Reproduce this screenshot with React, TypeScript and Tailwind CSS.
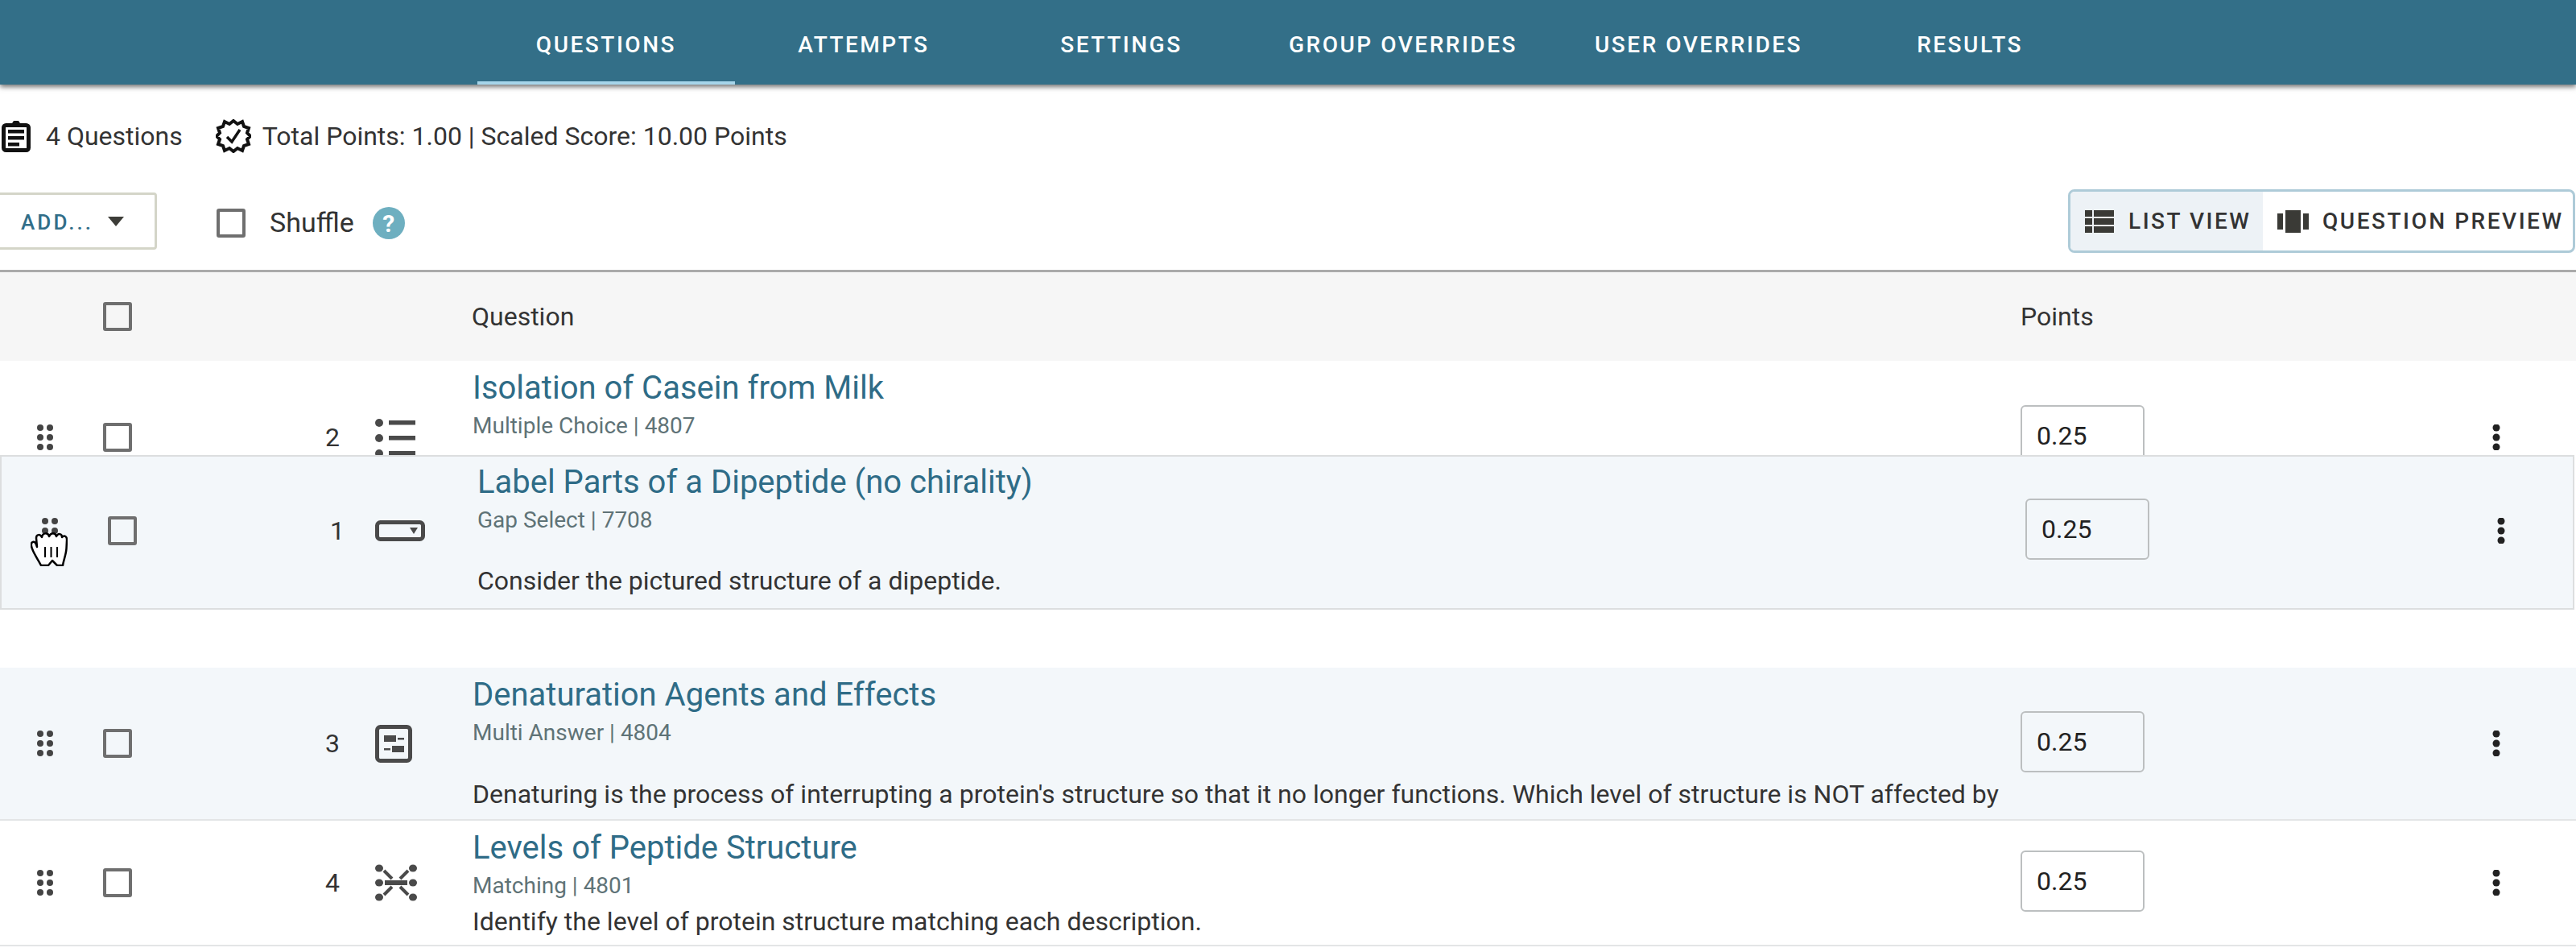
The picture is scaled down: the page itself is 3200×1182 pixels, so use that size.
import React from 'react';

const tabs = [
  { label: 'QUESTIONS', active: true },
  { label: 'ATTEMPTS' },
  { label: 'SETTINGS' },
  { label: 'GROUP OVERRIDES' },
  { label: 'USER OVERRIDES' },
  { label: 'RESULTS' },
];

const ClipboardIcon = () => (
  <svg width="36" height="40" viewBox="0 0 36 40" className="shrink-0">
    <rect x="2.500" y="6.500" width="31" height="31" rx="3" fill="none" stroke="#111" strokeWidth="5" />
    <path d="M11 7 L15 1 H21 L25 7 Z" fill="#111" />
    <rect x="8" y="12" width="20" height="4.500" fill="#111" />
    <rect x="8" y="20" width="20" height="4.500" fill="#111" />
    <rect x="8" y="28" width="14" height="4.500" fill="#111" />
  </svg>
);

const BadgeIcon = () => (
  <svg width="44" height="42" viewBox="0 0 44 42" className="shrink-0">
    <path
      d="M22 2 L27 6 L33 3 L35 9 L41 11 L39 17 L43 21 L39 25 L41 31 L35 33 L33 39 L27 36 L22 40 L17 36 L11 39 L9 33 L3 31 L5 25 L1 21 L5 17 L3 11 L9 9 L11 3 L17 6 Z"
      fill="none"
      stroke="#111"
      strokeWidth="4"
      strokeLinejoin="miter"
    />
    <path d="M14 22 L20 28 L30 13" fill="none" stroke="#111" strokeWidth="3.500" />
  </svg>
);

const Checkbox = () => <div className="w-9 h-9 shrink-0 rounded-[3px] border-[4px] border-[#6f6f6f]" />;

const DragHandle = () => (
  <svg width="20" height="32" viewBox="0 0 20 32" className="shrink-0">
    {[4, 16, 28].map((y) => (
      <g key={y} fill="#444">
        <circle cx="4" cy={y} r="4" />
        <circle cx="16" cy={y} r="4" />
      </g>
    ))}
  </svg>
);

const Kebab = () => (
  <svg width="10" height="32" viewBox="0 0 10 32" className="shrink-0">
    <g fill="#222">
      <circle cx="5" cy="4" r="4.500" />
      <circle cx="5" cy="16" r="4.500" />
      <circle cx="5" cy="28" r="4.500" />
    </g>
  </svg>
);

const ListIcon = () => (
  <svg width="50" height="46" viewBox="0 0 50 46">
    <g fill="#4a4a4a">
      <circle cx="5" cy="5" r="5" />
      <circle cx="5" cy="24" r="5" />
      <circle cx="5" cy="43" r="5" />
      <rect x="17" y="2" width="33" height="5.500" />
      <rect x="17" y="21" width="33" height="5.500" />
      <rect x="17" y="40" width="33" height="5.500" />
    </g>
  </svg>
);

const GapIcon = () => (
  <svg width="62" height="26" viewBox="0 0 62 26" className="-ml-[6px]">
    <rect x="2.500" y="2.500" width="57" height="21" rx="4" fill="none" stroke="#4a4a4a" strokeWidth="5" />
    <path d="M43 9 H53 L48 17 Z" fill="#4a4a4a" />
  </svg>
);

const MultiIcon = () => (
  <svg width="46" height="47" viewBox="0 0 46 47">
    <rect x="2.500" y="2.500" width="41" height="42" rx="4" fill="none" stroke="#4a4a4a" strokeWidth="5" />
    <g fill="#4a4a4a">
      <rect x="11" y="13" width="15" height="8" />
      <rect x="28" y="16" width="8" height="2.500" />
      <rect x="11" y="29" width="8" height="2.500" />
      <rect x="21" y="26" width="15" height="8" />
    </g>
  </svg>
);

const MatchIcon = () => (
  <svg width="52" height="46" viewBox="0 0 52 46">
    <g fill="#4a4a4a">
      <ellipse cx="5" cy="5" rx="5" ry="4.500" />
      <ellipse cx="47" cy="5" rx="5" ry="4.500" />
      <ellipse cx="5" cy="23" rx="5" ry="4.500" />
      <ellipse cx="47" cy="23" rx="5" ry="4.500" />
      <ellipse cx="5" cy="41" rx="5" ry="4.500" />
      <ellipse cx="47" cy="41" rx="5" ry="4.500" />
      <rect x="12" y="20" width="28" height="6" />
    </g>
    <path
      d="M11 8 L21 18 M41 8 L31 18 M11 38 L21 28 M41 38 L31 28"
      stroke="#4a4a4a"
      strokeWidth="4"
      fill="none"
    />
  </svg>
);

const HandCursor = () => (
  <svg width="46" height="42" viewBox="0 0 46 42">
    <path
      d="M13 41 C9 33 2 24 1 17 C0 11 5 10 7 15 L8 18 L7 7 C7 2 12 2 14 6 C15 0 22 0 23 5 C25 0 31 0 32 5 C34 1 39 1 39 6 C42 3 45.500 5 45 10 L44.500 20 C44 28 41 34 40 41 L33 41 L27 35 L22 41 Z"
      fill="#fff"
      stroke="#000"
      strokeWidth="2.500"
      strokeLinejoin="round"
    />
    <path d="M18 18 V31 M25.500 18 V31 M33 18 V31" stroke="#000" strokeWidth="2" />
  </svg>
);

type RowProps = {
  num: number;
  icon: React.ReactNode;
  title: string;
  kind: string;
  body?: string;
  bodyGap?: string;
  className?: string;
};

const Row = ({ num, icon, title, kind, body, bodyGap, className }: RowProps) => (
  <div className={`flex items-center ${className}`}>
    <div className="w-[128px] pl-[46px] shrink-0 flex">
      <DragHandle />
    </div>
    <Checkbox />
    <div className="w-[258px] shrink-0 text-right text-[32px] leading-none text-[#333]">{num}</div>
    <div className="w-[165px] pl-[44px] shrink-0 flex">{icon}</div>
    <div className="w-[1923px] shrink-0 self-start pt-[10px] pr-[20px] overflow-hidden">
      <div className="text-[40px] leading-[48px] text-[#2f6c87] whitespace-nowrap">{title}</div>
      <div className="mt-[5px] text-[28px] leading-[36px] text-[#5f7377] whitespace-nowrap">{kind}</div>
      {body && <div className={`${bodyGap} text-[32px] leading-[44px] text-[#333] whitespace-nowrap`}>{body}</div>}
    </div>
    <input
      readOnly
      value="0.25"
      className="w-[154px] h-[76px] mb-1 shrink-0 rounded-md border-2 border-[#bcbfc0] bg-transparent pl-[18px] text-[32px] text-[#222] outline-none"
    />
    <div className="ml-[432px] shrink-0 flex">
      <Kebab />
    </div>
  </div>
);

export default function App() {
  return (
    <div className="relative w-[3200px] h-[1182px] overflow-hidden bg-white font-['Roboto',sans-serif]">
      <header className="h-[105px] bg-[#336f88] flex justify-center shadow-[0_3px_6px_rgba(0,0,0,0.55)]">
        {tabs.map((t) => (
          <div
            key={t.label}
            className={`min-w-[320px] px-12 flex items-center justify-center pt-[10px] text-[28px] font-medium tracking-[0.09em] text-white border-b-4 ${
              t.active ? 'border-[#a6d5ea]' : 'border-transparent'
            }`}
          >
            {t.label}
          </div>
        ))}
      </header>

      <div className="h-[122px] pt-[42px] pl-[2px] flex items-start gap-[41px] text-[32px] leading-[44px] text-[#333]">
        <div className="flex items-center gap-[19px]">
          <ClipboardIcon />
          <span>4 Questions</span>
        </div>
        <div className="flex items-center gap-[14px]">
          <BadgeIcon />
          <span>Total Points: 1.00 | Scaled Score: 10.00 Points</span>
        </div>
      </div>

      <div className="h-[111px] pt-[12px] flex items-start border-b-[3px] border-[#aaaaaa]">
        <div className="w-[215px] h-[71px] -ml-[20px] rounded border-[3px] border-[#d4d5c8] pl-[43px] flex items-center gap-[18px]">
          <span className="pt-[3px] text-[26px] font-medium tracking-[0.12em] text-[#316e89]">ADD...</span>
          <span className="w-0 h-0 border-l-[10px] border-r-[10px] border-t-[12px] border-l-transparent border-r-transparent border-t-[#3d3d38]" />
        </div>
        <div className="ml-[74px] mt-[18px] flex items-center">
          <Checkbox />
          <span className="ml-[30px] pb-[2px] text-[34px] leading-none text-[#333]">Shuffle</span>
          <span className="ml-[23px] w-10 h-10 rounded-full bg-[#6eafc0] flex items-center justify-center text-[30px] font-bold text-white">?</span>
        </div>
        <div className="ml-auto mr-[1px] -mt-[4px] h-[79px] w-[630px] flex rounded-lg border-[3px] border-[#aecbd8] overflow-hidden text-[28px] font-medium tracking-[0.09em] text-[#333]">
          <div className="w-[239px] bg-[#edf2f6] pl-[18px] flex items-center gap-[18px]">
            <svg width="36" height="28" viewBox="0 0 36 28" className="shrink-0">
              <g fill="#3a3a36">
                <rect width="9" height="8" />
                <rect x="11" width="25" height="8" />
                <rect y="10" width="9" height="8" />
                <rect x="11" y="10" width="25" height="8" />
                <rect y="20" width="9" height="8" />
                <rect x="11" y="20" width="25" height="8" />
              </g>
            </svg>
            <span>LIST VIEW</span>
          </div>
          <div className="flex-1 pl-[18px] flex items-center gap-[17px]">
            <svg width="39" height="28" viewBox="0 0 39 28" className="shrink-0">
              <g fill="#3a3a36">
                <rect y="4" width="7" height="20" />
                <rect x="10" width="19" height="28" />
                <rect x="32" y="4" width="7" height="20" />
              </g>
            </svg>
            <span>QUESTION PREVIEW</span>
          </div>
        </div>
      </div>

      <div className="h-[110px] bg-[#f6f6f6] flex items-center text-[32px] text-[#333]">
        <div className="w-[128px] shrink-0" />
        <Checkbox />
        <div className="w-[422px] shrink-0" />
        <div className="w-[1924px] shrink-0">Question</div>
        <div>Points</div>
      </div>

      <Row
        num={2}
        icon={<ListIcon />}
        title="Isolation of Casein from Milk"
        kind="Multiple Choice | 4807"
        className="h-[190px]"
      />
      {/* placeholder left by the row being dragged */}
      <div className="h-[191px]" />
      <Row
        num={3}
        icon={<MultiIcon />}
        title="Denaturation Agents and Effects"
        kind="Multi Answer | 4804"
        body="Denaturing is the process of interrupting a protein's structure so that it no longer functions. Which level of structure is NOT affected by"
        bodyGap="mt-[36px]"
        className="h-[190px] bg-[#f3f7fa] border-b-2 border-[#e3e5e6]"
      />
      <Row
        num={4}
        icon={<MatchIcon />}
        title="Levels of Peptide Structure"
        kind="Matching | 4801"
        body="Identify the level of protein structure matching each description."
        bodyGap="mt-[4px]"
        className="h-[156px] border-b-2 border-[#e3e5e6]"
      />

      {/* dragged row floats over the list */}
      <div className="absolute left-0 top-[565px] w-[3198px] h-[192px] pl-[6px] bg-[#f3f7fa] border-2 border-[#dcdedf] box-border flex items-start">
        <Row
          num={1}
          icon={<GapIcon />}
          title="Label Parts of a Dipeptide (no chirality)"
          kind="Gap Select | 7708"
          body="Consider the pictured structure of a dipeptide."
          bodyGap="mt-[35px]"
          className="h-[188px] -mt-[2px] -ml-[2px]"
        />
      </div>
      <div className="absolute left-[38px] top-[661px]">
        <HandCursor />
      </div>
    </div>
  );
}
